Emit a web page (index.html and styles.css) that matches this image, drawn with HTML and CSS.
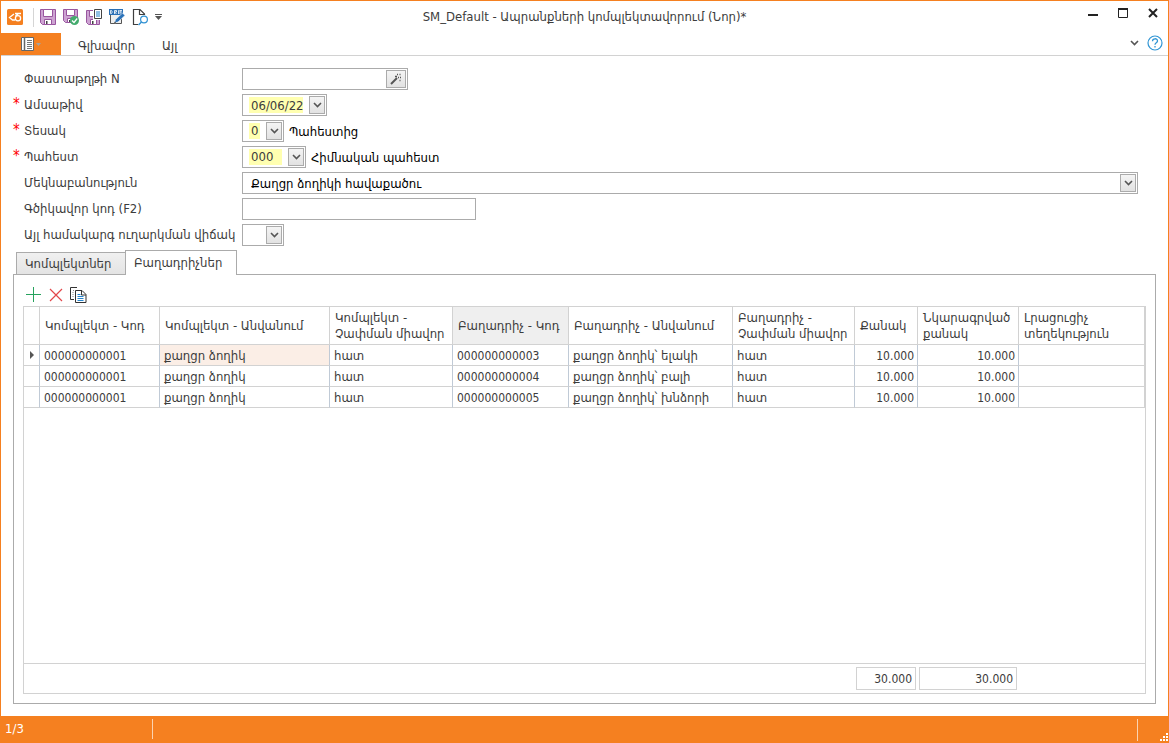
FILE: index.html
```html
<!DOCTYPE html>
<html lang="hy">
<head>
<meta charset="utf-8">
<title>SM_Default - Ապրանքների կոմպլեկտավորում (Նոր)*</title>
<link rel="stylesheet" href="styles.css">
</head>
<body>
<svg class="sprite" aria-hidden="true">
  <symbol id="chevron" viewBox="0 0 9 6"><path d="M1 1l3.5 3.5L8 1" fill="none" stroke="currentColor" stroke-width="1.6"/></symbol>
</svg>
<div class="window">
  <header class="titlebar">
    <div class="quick">
      <svg class="logo" width="16" height="16" viewBox="0 0 16 16"><rect width="16" height="16" rx="1.500" fill="#f58020"/><path d="M7 5L2.500 8.500 5.500 11H8M8 4.500h6M11.500 4.500L8.500 7" fill="none" stroke="#fff" stroke-width="1.300"/><circle cx="11" cy="9.300" r="2.600" fill="none" stroke="#fff" stroke-width="1.300"/></svg>
      <span class="divider"></span>
      <button type="button" class="tool" aria-label="Գրանցել"><svg width="16" height="16" viewBox="0 0 16 16"><path d="M.5 .5h15v15H2.500l-2-2z" fill="#cda3d2" stroke="#99569f"/><path d="M3.500 .500h9v7h-9z" fill="#fff" stroke="#99569f"/><path d="M4.500 10.500h7v5h-7z" fill="#fff" stroke="#99569f"/><path d="M6 12h1.500v3H6z" fill="#444"/></svg></button>
      <button type="button" class="tool" aria-label="Գրանցել և փակել"><svg width="16" height="16" viewBox="0 0 16 16"><path d="M.5 .5h14v13h-12l-2-2z" fill="#cda3d2" stroke="#99569f"/><path d="M3.500 .500h8v6h-8zM4.500 9.500h6v4h-6z" fill="#fff" stroke="#99569f"/><path d="M6 11h1.500v2H6z" fill="#444"/><circle cx="11.500" cy="11.500" r="4.500" fill="#43ab6d"/><path d="M9 11.500l2 2 3.200-4" fill="none" stroke="#fff" stroke-width="1.300"/></svg></button>
      <button type="button" class="tool" aria-label="Գրանցել և պատճենել"><svg width="16" height="16" viewBox="0 0 16 16"><path d="M.5 1.500h13v14h-11l-2-2z" fill="#cda3d2" stroke="#99569f"/><path d="M3.500 1.500h5v6h-5zM4.500 10.500h6v5h-6z" fill="#fff" stroke="#99569f"/><path d="M6 12h1.500v3H6z" fill="#444"/><path d="M7 -1h10V11H7z" fill="#fff"/><path d="M8.500 .5h7v9h-7z" fill="#fff" stroke="#444"/><path d="M10 3h4M10 5h4M10 7h4" stroke="#2280c8"/></svg></button>
      <button type="button" class="tool" aria-label="Սևագիր"><svg width="16" height="16" viewBox="0 0 16 16"><path d="M1.500 6v8.500h11V6" fill="#eee" stroke="#555"/><path d="M0 0h14v6H0z" fill="#2a6fb5"/><path d="M1.500 1.500v3h1l.8-1.500-.8-1.500zM5.500 5V1.500h2v1.500h-2l2 2M9.500 5V1.500h1M11 5V1.500h2M11 3h2" fill="none" stroke="#fff" stroke-width=".8"/><path d="M5.500 14l1-3.500L13.500 4 16 6.500 9 13z" fill="#2b72b8" stroke="#fff" stroke-width=".6"/><path d="M5 14.500l.8-2 1.200 1.200z" fill="#333"/></svg></button>
      <button type="button" class="tool" aria-label="Դիտել"><svg width="16" height="16" viewBox="0 0 16 16"><path d="M6 15.500H1.500V.500H8L12.500 5v1M7.500 .500V5.500H12.500" fill="none" stroke="#3f3f3f" stroke-width="1.200"/><circle cx="12" cy="10.500" r="3.400" fill="#fff" stroke="#3091d2" stroke-width="1.200"/><path d="M9.500 13l-3 3" stroke="#3091d2" stroke-width="1.500"/></svg></button>
      <button type="button" class="more" aria-label="Կարգավորել"><svg width="7" height="6" viewBox="0 0 7 6"><path d="M0 .5h7" stroke="#555"/><path d="M0 2h7L3.500 6z" fill="#555"/></svg></button>
    </div>
    <h1 class="title">SM_Default - Ապրանքների կոմպլեկտավորում (Նոր)*</h1>
    <div class="controls">
      <button type="button" aria-label="Ծալել"><svg width="10" height="12" viewBox="0 0 10 12"><path d="M0 8h10" stroke="#222" stroke-width="2"/></svg></button>
      <button type="button" aria-label="Մեծացնել"><svg width="10" height="12" viewBox="0 0 10 12"><path d="M.5 1.500h9v9h-9zM0 2.500h10" fill="none" stroke="#222"/><path d="M0 2h10" stroke="#222" stroke-width="2"/></svg></button>
      <button type="button" aria-label="Փակել"><svg width="10" height="12" viewBox="0 0 10 12"><path d="M1 2l8 8M9 2l-8 8" stroke="#222" stroke-width="2"/></svg></button>
    </div>
  </header>
  <nav class="ribbon">
    <button type="button" class="file" aria-label="Ցանկ"><svg width="20" height="14" viewBox="0 0 20 14"><path d="M.5 .5h12v13H.5z" fill="#fff" stroke="#666"/><path d="M3.500 0v14" stroke="#666" stroke-width="1.500"/><path d="M6 3.500h5M6 5.500h5M6 7.500h5M6 9.500h5M6 11.500h5" stroke="#777"/><path d="M15 6h5l-2.500 3z" fill="#a8a29c"/></svg></button>
    <a href="#main" class="menu">Գլխավոր</a>
    <a href="#other" class="menu">Այլ</a>
    <div class="help">
      <button type="button" aria-label="Ծալել ժապավենը"><svg class="chev" width="9" height="6"><use href="#chevron"/></svg></button>
      <button type="button" aria-label="Օգնություն"><svg width="16" height="16" viewBox="0 0 16 16"><circle cx="8" cy="8" r="7" fill="#fff" stroke="#3095d4" stroke-width="1.200"/><path d="M5.500 6.200C5.500 3 10.500 3 10.500 6c0 1.800-2.500 1.800-2.500 3.800M8 11v1.500" fill="none" stroke="#3095d4" stroke-width="1.300"/></svg></button>
    </div>
  </nav>
  <main class="content">
    <form class="form">
      <div class="row"><label class="label" for="doc">Փաստաթղթի N</label>
        <div class="field doc"><input id="doc" type="text"><button type="button" class="wand" aria-label="Գեներացնել"><svg width="12" height="12" viewBox="0 0 12 12"><path d="M1 11l6-6" stroke="#555" stroke-width="2"/><path d="M5 3.500h2M7 1.500h1M9.500 1.500h1M8 4.500h1M10 4.500h1M9.500 7.500h1" stroke="#555" stroke-width="1.500"/></svg></button></div></div>
      <div class="row"><label class="label required" for="date">Ամսաթիվ</label>
        <div class="field date"><input id="date" class="marked" type="text" value="06/06/22"><button type="button" class="drop" aria-label="Օրացույց"><svg class="chev" width="9" height="6"><use href="#chevron"/></svg></button></div></div>
      <div class="row"><label class="label required" for="type">Տեսակ</label>
        <div class="field small"><select id="type" class="marked"><option>0</option></select><span class="drop"><svg class="chev" width="9" height="6"><use href="#chevron"/></svg></span></div><span class="hint">Պահեստից</span></div>
      <div class="row"><label class="label required" for="store">Պահեստ</label>
        <div class="field store"><select id="store" class="marked"><option>000</option></select><span class="drop"><svg class="chev" width="9" height="6"><use href="#chevron"/></svg></span></div><span class="hint">Հիմնական պահեստ</span></div>
      <div class="row"><label class="label" for="note">Մեկնաբանություն</label>
        <div class="field note"><select id="note"><option>Քաղցր ձողիկի հավաքածու</option></select><span class="drop"><svg class="chev" width="9" height="6"><use href="#chevron"/></svg></span></div></div>
      <div class="row"><label class="label" for="bar">Գծիկավոր կոդ (F2)</label>
        <div class="field bar"><input id="bar" type="text"></div></div>
      <div class="row"><label class="label" for="state">Այլ համակարգ ուղարկման վիճակ</label>
        <div class="field small"><select id="state"><option></option></select><span class="drop"><svg class="chev" width="9" height="6"><use href="#chevron"/></svg></span></div></div>
    </form>
    <div class="tabs" role="tablist">
      <button type="button" class="tab" role="tab">Կոմպլեկտներ</button>
      <button type="button" class="tab active" role="tab" aria-selected="true">Բաղադրիչներ</button>
    </div>
    <section class="panel">
      <div class="toolbar">
        <button type="button" aria-label="Ավելացնել"><svg width="16" height="16" viewBox="0 0 16 16"><path d="M7.500 0v15M0 7.500h15" stroke="#26a25d"/></svg></button>
        <button type="button" aria-label="Հեռացնել"><svg width="16" height="16" viewBox="0 0 16 16"><path d="M2 2l12 12M14 2L2 14" stroke="#e2474b" stroke-width="1.200"/></svg></button>
        <button type="button" aria-label="Պատճենել"><svg width="17" height="16" viewBox="0 0 17 16"><path d="M4 12.500H.5V.500H7" fill="none" stroke="#333"/><path d="M3 3.500h2M2.500 5.500h2M2.500 7.500h2M2.500 9.500h2" stroke="#888" stroke-dasharray="1 1"/><path d="M5.500 3.500h6.500l4 4v8H5.500z" fill="#fff" stroke="#333"/><path d="M11.500 3.500v4.500H16" fill="none" stroke="#333"/><path d="M7.500 7.500h3M7.500 9.500h6M7.500 11.500h6M7.500 13.500h6" stroke="#2584cd"/></svg></button>
      </div>
      <div class="grid">
        <table class="table">
          <colgroup><col class="c-mark"><col class="c-code"><col class="c-name"><col class="c-unit"><col class="c-pcode"><col class="c-pname"><col class="c-punit"><col class="c-qty"><col class="c-desc"><col></colgroup>
          <thead><tr><th></th><th>Կոմպլեկտ - Կոդ</th><th>Կոմպլեկտ - Անվանում</th><th>Կոմպլեկտ -<br>Չափման միավոր</th><th class="sorted">Բաղադրիչ - Կոդ</th><th>Բաղադրիչ - Անվանում</th><th>Բաղադրիչ -<br>Չափման միավոր</th><th>Քանակ</th><th>Նկարագրված<br>քանակ</th><th>Լրացուցիչ<br>տեղեկություն</th></tr></thead>
          <tbody>
            <tr><td class="mark"><svg width="4" height="8" viewBox="0 0 4 8"><path d="M0 0l4 4-4 4z" fill="#555"/></svg></td><td class="code">000000000001</td><td class="current">քաղցր ձողիկ</td><td>հատ</td><td class="code">000000000003</td><td>քաղցր ձողիկ՝ ելակի</td><td>հատ</td><td class="num">10.000</td><td class="num">10.000</td><td></td></tr>
            <tr><td></td><td class="code">000000000001</td><td>քաղցր ձողիկ</td><td>հատ</td><td class="code">000000000004</td><td>քաղցր ձողիկ՝ բալի</td><td>հատ</td><td class="num">10.000</td><td class="num">10.000</td><td></td></tr>
            <tr><td></td><td class="code">000000000001</td><td>քաղցր ձողիկ</td><td>հատ</td><td class="code">000000000005</td><td>քաղցր ձողիկ՝ խնձորի</td><td>հատ</td><td class="num">10.000</td><td class="num">10.000</td><td></td></tr>
          </tbody>
        </table>
        <div class="totals"><output>30.000</output><output>30.000</output></div>
      </div>
    </section>
  </main>
  <footer class="status"><span class="count">1/3</span><span class="grip"><svg width="8" height="8" viewBox="0 0 8 8"><path d="M6 0h2v2H6zM3 3h2v2H3zM6 3h2v2H6zM0 6h2v2H0zM3 6h2v2H3zM6 6h2v2H6z" fill="#fff"/></svg></span></footer>
</div>
</body>
</html>
```
FILE: styles.css
```css
* { box-sizing: border-box; }
body { margin: 0; color: #3c3c3c; background: #fff; font: 13px/16px "DejaVu Sans Condensed", "DejaVu Sans", sans-serif; }
button, input, select { font: inherit; color: inherit; margin: 0; padding: 0; border: 0; background: none; }
button { display: flex; align-items: center; justify-content: center; }
svg { display: block; overflow: visible; }
.sprite { width: 0; height: 0; position: absolute; }
.window { min-height: 100vh; display: flex; flex-direction: column; border: 1px solid #f58020; border-bottom: 0; }

.titlebar { display: grid; grid-template-columns: 1fr auto 1fr; height: 32px; align-items: center; }
.quick { display: flex; align-items: center; gap: 7px; padding-left: 6px; }
.divider { width: 1px; height: 19px; margin: 0 -1px 0 3px; background: #d5d5d5; }
.title { margin: 0; font-size: 13px; font-weight: normal; }
.controls { display: flex; justify-content: flex-end; gap: 20px; padding: 0 10px 8px 0; }

.ribbon { display: flex; height: 23px; align-items: center; border-bottom: 1px solid #d2d2d2; }
.file { width: 60px; height: 22px; background: #f58020; }
.menu { margin-left: 17px; padding-top: 3px; color: inherit; text-decoration: none; }
.menu + .menu { margin-left: 27px; }
.help { display: flex; gap: 8px; margin-left: auto; padding: 0 5px 2px 0; }
.chev { color: #555; }

.content { flex: 1; display: flex; flex-direction: column; padding: 12px; }
.form { display: flex; flex-direction: column; gap: 4px; }
.row { display: flex; align-items: center; height: 22px; }
.label { width: 229px; flex: none; padding-left: 11px; white-space: nowrap; }
.required { padding-left: 0; }
.required::before { content: "*"; display: inline-block; width: 11px; color: #f00; font-size: 15px; line-height: 12px; }
.field { display: grid; grid-template-columns: minmax(0, 1fr) auto; align-items: center; height: 22px; padding: 1px; border: 1px solid #ababab; color: #000; }
.field input, .field select { grid-area: 1 / 1 / 2 / 3; width: 100%; height: 18px; padding: 2px 0 0 7px; appearance: none; outline: 0; }
.field .marked { padding: 1px 22px 1px 5px; color: #3c3c3c; background: #ffffb0 content-box; text-indent: 2px; }
.field .date-text { padding-right: 21px; }
.drop, .wand { grid-area: 1 / 2; display: flex; align-items: center; justify-content: center; width: 16px; height: 18px; border: 1px solid #ababab; background: linear-gradient(#f4f4f4, #e2e2e2); }
span.drop { pointer-events: none; z-index: 1; }
.wand { width: 20px; }
.doc { width: 166px; }
.date { width: 85px; }
.small { width: 42px; }
.store { width: 64px; }
.note { flex: 1; margin-right: 18px; }
.bar { width: 234px; }
.hint { margin-left: 5px; padding-top: 2px; color: #000; }

.tabs { display: flex; align-items: flex-end; padding-left: 3px; margin-top: 4px; z-index: 1; }
.tab { justify-content: flex-start; width: 110px; height: 22px; margin-bottom: 1px; padding-left: 8px; border: 1px solid #ababab; border-bottom: 0; background: linear-gradient(#f0f0f0, #e4e4e4); }
.tab.active { width: 112px; height: 25px; margin: 0 0 0 -1px; background: #fff; }
.panel { flex: 1; display: flex; flex-direction: column; margin-top: -1px; padding: 12px 9px 9px; border: 1px solid #ababab; }
.toolbar { display: flex; gap: 6px; height: 19px; padding: 0 0 3px 3px; }

.grid { flex: 1; display: flex; flex-direction: column; border: 1px solid #d2d2d2; }
.table { width: 100%; table-layout: fixed; border-collapse: separate; border-spacing: 0; border-right: 1px solid #d2d2d2; }
.c-mark { width: 16px; } .c-code { width: 120px; } .c-name { width: 170px; } .c-unit { width: 123px; } .c-pcode { width: 116px; }
.c-pname { width: 164px; } .c-punit { width: 122px; } .c-qty { width: 63px; } .c-desc { width: 101px; }
th, td { padding: 0 4px; border: solid #d2d2d2; border-width: 0 1px 1px 0; text-align: left; white-space: nowrap; }
th:last-child, td:last-child { border-right: 0; }
th { height: 38px; padding: 0 5px; font-weight: normal; }
td { height: 21px; padding-top: 1px; border-right-color: #c0cad6; }
.code, .num, .totals output { font-size: 12px; }
.sorted { background: #efefef; }
.current { background: #fbeee6; }
.num { padding-right: 3px; text-align: right; }
.mark { padding-left: 6px; padding-top: 0; }
.totals { display: grid; grid-template-columns: 60px 98px; gap: 3px; margin-top: auto; padding: 3px 0 3px 832px; border-top: 1px solid #d2d2d2; }
.totals output { height: 23px; padding-right: 3px; border: 1px solid #d2d2d2; text-align: right; line-height: 22px; }

.status { display: flex; justify-content: space-between; height: 27px; padding: 3px 0 4px 4px; color: #fff; background: #f58020; }
.count { width: 148px; border-right: 1px solid #fbd3b0; line-height: 20px; }
.grip { display: flex; align-items: flex-end; justify-content: flex-end; width: 31px; margin-bottom: -2px; border-left: 1px solid #fbd3b0; }
```
